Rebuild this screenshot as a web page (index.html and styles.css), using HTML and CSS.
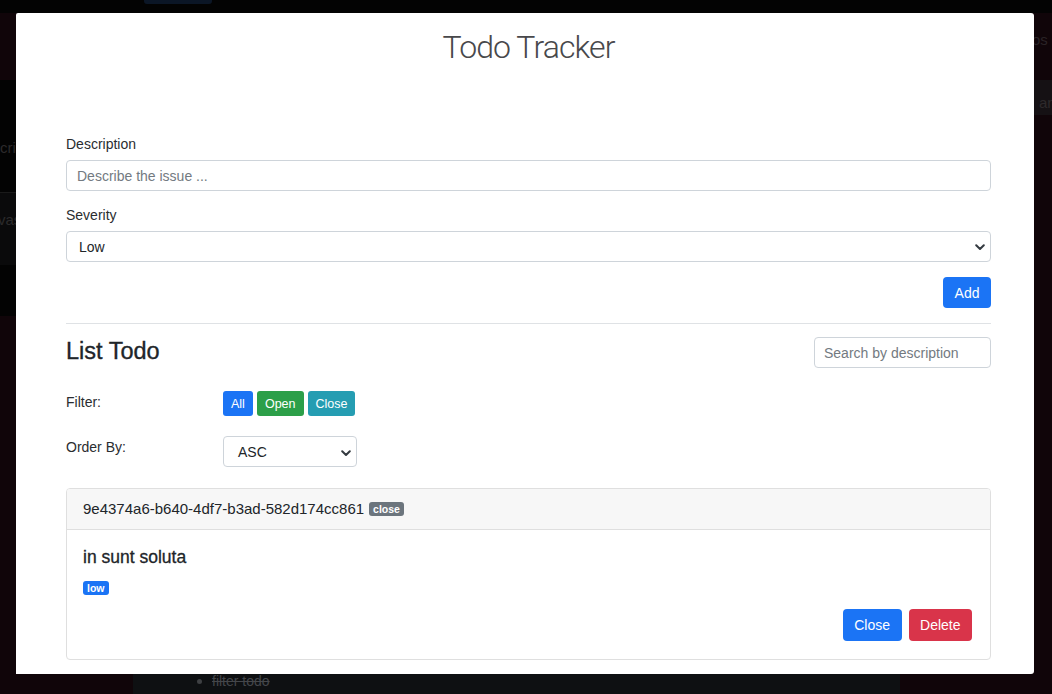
FILE: index.html
```html
<!DOCTYPE html>
<html lang="en">
<head>
<meta charset="utf-8">
<title>Todo Tracker</title>
<link rel="stylesheet" href="styles.css">
</head>
<body>
<div class="topbar"><span class="topbar-tab"></span></div>
<div class="stage">
  <aside class="side side-left">
    <div class="strip strip-top"></div>
    <div class="strip strip-black strip-cri"><span>cri</span></div>
    <div class="strip strip-line"></div>
    <div class="strip strip-grey strip-vas"><span>vas</span></div>
    <div class="strip strip-black strip-end"></div>
  </aside>

  <main class="modal">
    <h1 class="title">Todo Tracker</h1>

    <div class="field">
      <label class="label" for="desc">Description</label>
      <input class="input" id="desc" type="text" placeholder="Describe the issue ...">
    </div>

    <div class="field field-last">
      <label class="label">Severity</label>
      <div class="select select-wide">
        <span>Low</span>
        <svg class="chev" viewBox="0 0 10 7" width="10" height="7"><polyline points="1.2,1.2 5,5 8.8,1.2"/></svg>
      </div>
    </div>

    <div class="actions">
      <button class="btn btn-primary">Add</button>
    </div>

    <div class="divider"></div>

    <div class="list-head">
      <h2 class="list-title">List Todo</h2>
      <input class="input search" type="text" placeholder="Search by description">
    </div>

    <div class="opt-row opt-filter">
      <span class="opt-label">Filter:</span>
      <div class="btn-group">
        <button class="btn btn-sm btn-primary">All</button>
        <button class="btn btn-sm btn-success">Open</button>
        <button class="btn btn-sm btn-info">Close</button>
      </div>
    </div>

    <div class="opt-row opt-order">
      <span class="opt-label">Order By:</span>
      <div class="select select-small">
        <span>ASC</span>
        <svg class="chev" viewBox="0 0 10 7" width="10" height="7"><polyline points="1.2,1.2 5,5 8.8,1.2"/></svg>
      </div>
    </div>

    <section class="card">
      <header class="card-head">
        <span>9e4374a6-b640-4df7-b3ad-582d174cc861</span>
        <span class="badge badge-grey">close</span>
      </header>
      <div class="card-body">
        <h3 class="card-title">in sunt soluta</h3>
        <div class="card-badges"><span class="badge badge-blue">low</span></div>
        <div class="card-actions">
          <button class="btn btn-primary">Close</button>
          <button class="btn btn-danger">Delete</button>
        </div>
      </div>
    </section>
  </main>

  <aside class="side side-right">
    <div class="strip strip-os"><span>os</span></div>
    <div class="strip strip-an"><span>an</span></div>
  </aside>
</div>
<div class="bottom">
  <div class="bottom-panel">
    <span class="dot"></span><span class="done">filter todo</span>
  </div>
</div>
</body>
</html>
```

FILE: styles.css
```css
html, body {
  margin: 0;
  padding: 0;
}

body {
  width: 1052px;
  height: 694px;
  overflow: hidden;
  background: #100509;
  font-family: "Liberation Sans", Arial, sans-serif;
  color: #212529;
}

/* ---------- dimmed background page ---------- */
.topbar {
  height: 13px;
  background: #030303;
  padding-left: 144px;
}

.topbar-tab {
  display: block;
  width: 68px;
  height: 4px;
  background: #0b1626;
  border-radius: 0 0 3px 3px;
}

.stage {
  display: flex;
  height: 661px;
}

.side {
  display: flex;
  flex-direction: column;
  overflow: hidden;
  color: #2c2a2b;
  font-size: 15px;
  line-height: 16px;
  white-space: nowrap;
}

.side-left {
  width: 16px;
}

.side-right {
  width: 18px;
}

.strip-top {
  height: 67px;
}

.strip-black {
  background: #030303;
}

.strip-grey {
  background: #0a0a0b;
}

.strip-cri {
  height: 112px;
  box-sizing: border-box;
  padding-top: 60px;
}

.strip-line {
  height: 1px;
  background: #1a1a1a;
}

.strip-vas {
  height: 72px;
  box-sizing: border-box;
  padding-top: 19px;
  text-indent: -2px;
}

.strip-end {
  height: 51px;
}

.strip-os {
  height: 67px;
  box-sizing: border-box;
  padding-top: 19px;
  text-indent: -2px;
  color: #2a2326;
}

.strip-an {
  height: 35px;
  box-sizing: border-box;
  padding: 15px 0 0 5px;
  background: #151114;
  color: #2d292b;
}

.bottom {
  height: 20px;
  padding-left: 133px;
}

.bottom-panel {
  width: 767px;
  height: 20px;
  background: #0e1012;
  display: flex;
  align-items: flex-start;
  box-sizing: border-box;
}

.dot {
  width: 5px;
  height: 5px;
  border-radius: 50%;
  background: #3e4043;
  margin: 5px 10px 0 64px;
}

.done {
  font-size: 14px;
  line-height: 14px;
  color: #44464a;
  text-decoration: line-through;
}

/* ---------- modal ---------- */
.modal {
  width: 1018px;
  box-sizing: border-box;
  padding: 14px 43px 0 50px;
  background: #ffffff;
  border-radius: 2px 3px 3px 0;
  overflow: hidden;
}

.title {
  margin: 0 0 67px;
  text-align: center;
  font-family: Roboto, "Liberation Sans", sans-serif;
  font-weight: 300;
  font-size: 32px;
  line-height: 40px;
  letter-spacing: -0.9px;
  color: #48484b;
}

.field {
  margin-bottom: 14px;
}

.field-last {
  margin-bottom: 0;
}

.label {
  display: block;
  font-size: 14px;
  line-height: 21px;
  margin-bottom: 5px;
  color: #2a2d30;
}

.input {
  display: block;
  width: 100%;
  box-sizing: border-box;
  height: 31px;
  margin: 0;
  padding: 0 10px;
  border: 1px solid #ced4da;
  border-radius: 4px;
  font-family: "Liberation Sans", Arial, sans-serif;
  font-size: 14px;
  color: #212529;
  background: #fff;
  outline: none;
}

.input::placeholder {
  color: #737a81;
}

.select {
  display: flex;
  align-items: center;
  justify-content: space-between;
  box-sizing: border-box;
  height: 31px;
  border: 1px solid #ced4da;
  border-radius: 4px;
  font-size: 14px;
  color: #212529;
  background: #fff;
}

.select-wide {
  padding: 0 5px 0 12px;
}

.select-small {
  width: 134px;
  padding: 0 5px 0 14px;
}

.chev {
  display: block;
  fill: none;
  stroke: #343a40;
  stroke-width: 2;
  stroke-linecap: round;
  stroke-linejoin: round;
}

.select-wide .chev {
  margin-top: 1px;
}

.select-small .chev {
  margin-top: 3px;
}

.actions {
  display: flex;
  justify-content: flex-end;
  margin-top: 15px;
}

.btn {
  display: inline-flex;
  align-items: center;
  justify-content: center;
  box-sizing: border-box;
  height: 31px;
  padding: 0 11.5px;
  border: none;
  border-radius: 4px;
  font-family: "Liberation Sans", Arial, sans-serif;
  font-size: 14px;
  color: #ffffff;
  cursor: pointer;
}

.btn-primary {
  background: #1b74f5;
}

.btn-success {
  background: #2c9f49;
}

.btn-info {
  background: #259db2;
}

.btn-danger {
  background: #d9344a;
}

.btn-sm {
  height: 25px;
  padding: 0 8px;
  font-size: 12.5px;
  border-radius: 3px;
}

.divider {
  height: 1px;
  background: #dfe2e5;
  margin-top: 15px;
}

.list-head {
  display: flex;
  justify-content: space-between;
  align-items: flex-start;
  margin-top: 13px;
}

.list-title {
  margin: 0;
  font-size: 23.5px;
  line-height: 28px;
  font-weight: 400;
  -webkit-text-stroke: 0.35px #212529;
  color: #212529;
}

.search {
  width: 177px;
  padding: 0 9px;
}

.opt-row {
  display: grid;
  grid-template-columns: 157px auto;
  align-items: start;
  justify-content: start;
}

.opt-filter {
  margin-top: 23px;
}

.opt-order {
  margin-top: 20px;
}

.opt-label {
  font-size: 14px;
  line-height: 21px;
  padding-top: 1px;
  color: #2a2d30;
}

.btn-group {
  display: flex;
  gap: 4px;
}

/* ---------- card ---------- */
.card {
  margin-top: 21px;
  border: 1px solid #dfdfdf;
  border-radius: 4px;
  overflow: hidden;
}

.card-head {
  display: flex;
  align-items: center;
  gap: 5px;
  padding: 9px 16px 10px;
  background: #f7f7f7;
  border-bottom: 1px solid #dfdfdf;
  font-size: 15px;
  line-height: 21px;
  color: #212529;
}

.badge {
  display: inline-block;
  height: 14px;
  padding: 0 4px;
  border-radius: 3px;
  font-size: 10.5px;
  line-height: 14px;
  font-weight: 700;
  color: #fff;
}

.badge-grey {
  background: #6c757d;
}

.badge-blue {
  background: #1b74f5;
}

.card-body {
  padding: 17px 18px 18px 16px;
}

.card-title {
  margin: 0;
  font-size: 17.5px;
  line-height: 21px;
  font-weight: 400;
  -webkit-text-stroke: 0.3px #212529;
  color: #212529;
}

.card-badges {
  display: flex;
  margin-top: 13px;
}

.card-actions {
  display: flex;
  justify-content: flex-end;
  gap: 7px;
  margin-top: 14px;
}

.card-actions .btn {
  height: 32px;
}
```
